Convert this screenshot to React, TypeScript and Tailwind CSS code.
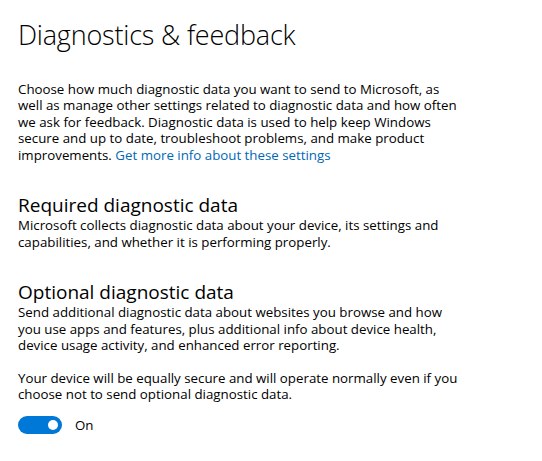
import React, { useState } from 'react';

const font = { fontFamily: '"Open Sans", "Noto Sans", sans-serif' };

const Toggle: React.FC<{ on: boolean; onChange: (v: boolean) => void }> = ({ on, onChange }) => (
  <button
    type="button"
    onClick={() => onChange(!on)}
    className={
      on
        ? 'w-[44px] h-[18px] rounded-full bg-[#0078d7] flex items-center justify-end pr-[4px]'
        : 'w-[44px] h-[18px] rounded-full border-2 border-black bg-white flex items-center justify-start pl-[3px]'
    }
  >
    <span className={on ? 'w-[10px] h-[10px] rounded-full bg-white' : 'w-[10px] h-[10px] rounded-full bg-black'} />
  </button>
);

export default function App() {
  const [optional, setOptional] = useState(true);

  return (
    <div className="min-h-screen bg-white text-black px-[18px] pt-[17px]" style={font}>
      <h1 className="text-[27px] leading-[36px] font-light tracking-[-0.2px]">Diagnostics &amp; feedback</h1>

      <p className="mt-[27.6px] text-[13.3px] leading-[16.5px]">
        Choose how much diagnostic data you want to send to Microsoft, as
        <br />
        well as manage other settings related to diagnostic data and how often
        <br />
        we ask for feedback. Diagnostic data is used to help keep Windows
        <br />
        secure and up to date, troubleshoot problems, and make product
        <br />
        improvements. <a href="#" className="text-[#0067b8]">Get more info about these settings</a>
      </p>

      <section className="mt-[30px]">
        <h2 className="text-[19px] leading-[24px]">Required diagnostic data</h2>
        <p className="text-[13.3px] leading-[16.5px]">
          Microsoft collects diagnostic data about your device, its settings and
          <br />
          capabilities, and whether it is performing properly.
        </p>
      </section>

      <section className="mt-[30px]">
        <h2 className="text-[19px] leading-[24px]">Optional diagnostic data</h2>
        <p className="text-[13.3px] leading-[16.5px]">
          Send additional diagnostic data about websites you browse and how
          <br />
          you use apps and features, plus additional info about device health,
          <br />
          device usage activity, and enhanced error reporting.
        </p>
        <p className="mt-[16px] text-[13.3px] leading-[16.5px]">
          Your device will be equally secure and will operate normally even if you
          <br />
          choose not to send optional diagnostic data.
        </p>
        <div className="mt-[13.5px] flex items-center gap-[13px]">
          <Toggle on={optional} onChange={setOptional} />
          <span className="text-[13.3px] leading-[16.5px]">{optional ? 'On' : 'Off'}</span>
        </div>
      </section>
    </div>
  );
}
